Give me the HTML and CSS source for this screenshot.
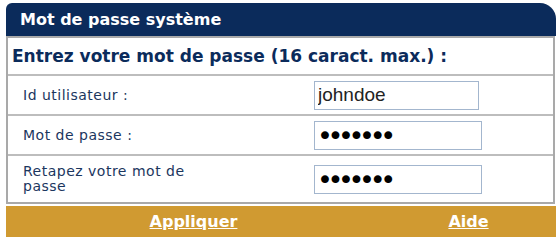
FILE: index.html
```html
<!DOCTYPE html>
<html lang="fr">
<head>
<meta charset="utf-8">
<title>Mot de passe système</title>
<link rel="stylesheet" href="styles.css">
</head>
<body>
<div class="panel">
  <div class="title">Mot de passe système</div>
  <div class="box">
    <div class="intro">Entrez votre mot de passe (16 caract. max.) :</div>
    <div class="row row-std">
      <label class="lbl" for="uid">Id utilisateur :</label>
      <input class="field field-short" id="uid" type="text" value="johndoe">
    </div>
    <div class="row row-std">
      <label class="lbl" for="pw1">Mot de passe :</label>
      <input class="field field-pw" id="pw1" type="password" value="1234567">
    </div>
    <div class="row row-tall">
      <label class="lbl" for="pw2">Retapez votre mot de passe</label>
      <input class="field field-pw" id="pw2" type="password" value="1234567">
    </div>
  </div>
  <div class="actions">
    <a class="act" href="#">Appliquer</a>
    <a class="act" href="#">Aide</a>
  </div>
</div>
</body>
</html>
```

FILE: styles.css
```css
html, body {
  margin: 0;
  padding: 0;
  background: #ffffff;
}

.panel {
  margin: 3px 0 0 6px;
  width: 550px;
}

.title {
  height: 33px;
  display: flex;
  align-items: center;
  padding-left: 14px;
  background: #0b2b5b;
  color: #ffffff;
  border-radius: 6px 16px 0 0;
  font: bold 16px "DejaVu Sans", Verdana, sans-serif;
}

.box {
  margin-right: 1px;
  border: 2px solid #a9a9a9;
  background: #ffffff;
}

.intro {
  height: 36px;
  display: flex;
  align-items: center;
  padding-left: 4px;
  color: #0b2b5b;
  font: bold 17px "DejaVu Sans", Verdana, sans-serif;
}

.row {
  display: flex;
  align-items: center;
  border-top: 2px solid #bdbdbd;
}

.row-std {
  height: 38px;
}

.row-tall {
  height: 46px;
}

.lbl {
  box-sizing: border-box;
  width: 306px;
  padding: 0 110px 0 15px;
  color: #1b365e;
  font: 14px/15px "DejaVu Sans", Verdana, sans-serif;
  letter-spacing: 0.5px;
}

.field {
  box-sizing: border-box;
  height: 29px;
  margin: 0;
  padding: 0 3px;
  border: 1px solid #a3b6ce;
  background: #ffffff;
  color: #222222;
  font: 19px "Liberation Sans", Arial, sans-serif;
  outline: none;
}

.field-short {
  width: 165px;
}

.field-pw {
  width: 168px;
  padding: 0 2px;
  color: #000000;
  font: 27px "DejaVu Sans", sans-serif;
  letter-spacing: -5.4px;
}

.actions {
  margin-top: 2px;
  height: 31px;
  display: grid;
  grid-template-columns: 375px 1fr;
  align-items: center;
  background: #d09a31;
}

.act {
  justify-self: center;
  color: #ffffff;
  font: bold 16px "DejaVu Sans", Verdana, sans-serif;
  text-decoration: underline;
}
```
